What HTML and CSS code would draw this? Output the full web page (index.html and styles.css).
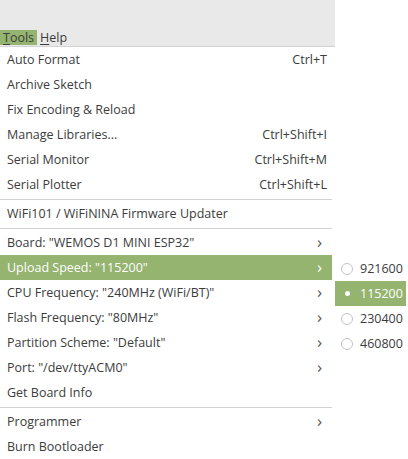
FILE: index.html
```html
<!DOCTYPE html>
<html>
<head>
<meta charset="utf-8">
<link rel="stylesheet" href="styles.css">
</head>
<body>
<div class="top"></div>
<div class="menubar">
  <span class="mb-item active"><u>T</u>ools</span>
  <span class="mb-item"><u>H</u>elp</span>
</div>
<div class="menu">
  <div class="row"><span>Auto Format</span><span class="key">Ctrl+T</span></div>
  <div class="row"><span>Archive Sketch</span></div>
  <div class="row"><span>Fix Encoding &amp; Reload</span></div>
  <div class="row"><span>Manage Libraries...</span><span class="key">Ctrl+Shift+I</span></div>
  <div class="row"><span>Serial Monitor</span><span class="key">Ctrl+Shift+M</span></div>
  <div class="row"><span>Serial Plotter</span><span class="key">Ctrl+Shift+L</span></div>
  <div class="sep"></div>
  <div class="row"><span>WiFi101 / WiFiNINA Firmware Updater</span></div>
  <div class="sep"></div>
  <div class="row"><span>Board: "WEMOS D1 MINI ESP32"</span><span class="chev">&#x203A;</span></div>
  <div class="row hl"><span>Upload Speed: "115200"</span><span class="chev">&#x203A;</span></div>
  <div class="row"><span>CPU Frequency: "240MHz (WiFi/BT)"</span><span class="chev">&#x203A;</span></div>
  <div class="row"><span>Flash Frequency: "80MHz"</span><span class="chev">&#x203A;</span></div>
  <div class="row"><span>Partition Scheme: "Default"</span><span class="chev">&#x203A;</span></div>
  <div class="row"><span>Port: "/dev/ttyACM0"</span><span class="chev">&#x203A;</span></div>
  <div class="row"><span>Get Board Info</span></div>
  <div class="sep"></div>
  <div class="row"><span>Programmer</span><span class="chev">&#x203A;</span></div>
  <div class="row"><span>Burn Bootloader</span></div>
</div>
<div class="submenu">
  <div class="srow"><span class="radio"></span><span>921600</span></div>
  <div class="srow hl"><span class="radio on"></span><span>115200</span></div>
  <div class="srow"><span class="radio"></span><span>230400</span></div>
  <div class="srow"><span class="radio"></span><span>460800</span></div>
</div>
</body>
</html>
```
FILE: styles.css
```css
html, body {
  margin: 0;
  padding: 0;
  background: #ffffff;
}
body {
  width: 408px;
  height: 459px;
  overflow: hidden;
  position: relative;
  font-family: "Open Sans", "DejaVu Sans", sans-serif;
  font-size: 12.5px;
  color: #3c3c3c;
}
.top {
  width: 335px;
  height: 30px;
  background: #e9e9e9;
}
.menubar {
  width: 335px;
  height: 16px;
  background: #e9e9e9;
  border-bottom: 1px solid #d4d4d4;
  display: flex;
  align-items: center;
}
.mb-item {
  height: 15px;
  line-height: 15px;
  padding: 0 3px;
  margin-top: 0;
  align-self: flex-start;
}
.mb-item.active {
  background: #94b46f;
}
.mb-item u {
  text-decoration: underline;
  text-underline-offset: 2px;
}
.menu {
  width: 332px;
  display: flex;
  flex-direction: column;
}
.row {
  height: 25px;
  display: flex;
  align-items: center;
  justify-content: space-between;
  padding: 0 5px 0 7px;
  white-space: nowrap;
}
.row.hl {
  background: #94b46f;
  color: #ffffff;
}
.key {
  color: #3c3c3c;
}
.chev {
  font-size: 17px;
  line-height: 1;
  margin-right: 5px;
  color: #555555;
  position: relative;
  top: -1px;
}
.row.hl .chev {
  color: #ffffff;
}
.sep {
  height: 1px;
  background: #d2d2d2;
  margin: 2px 0 1px 0;
}
.submenu {
  position: absolute;
  left: 335px;
  top: 256px;
  width: 71px;
  background: #ffffff;
}
.srow {
  height: 25px;
  display: flex;
  align-items: center;
  padding-left: 6px;
  gap: 7px;
  white-space: nowrap;
}
.srow.hl {
  background: #94b46f;
  color: #ffffff;
}
.radio {
  width: 12px;
  height: 12px;
  border: 1px solid #c4c4c4;
  border-radius: 50%;
  box-sizing: border-box;
  flex: none;
  display: flex;
  align-items: center;
  justify-content: center;
}
.radio.on {
  border-color: transparent;
}
.radio.on::after {
  content: "";
  width: 5px;
  height: 5px;
  border-radius: 50%;
  background: #ffffff;
}
```
